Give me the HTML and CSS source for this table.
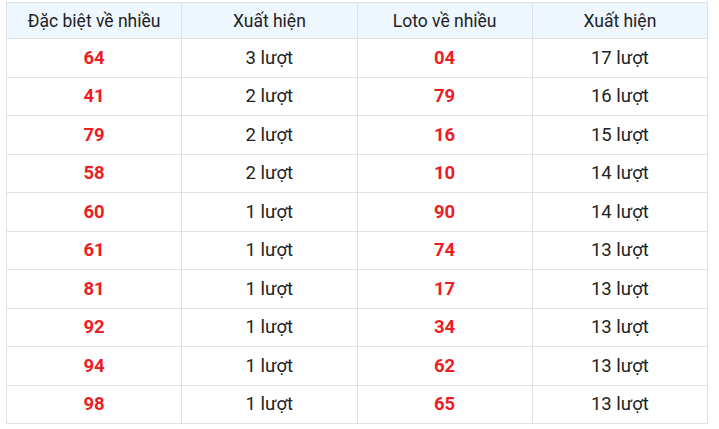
FILE: index.html
```html
<!DOCTYPE html>
<html>
<head>
<meta charset="utf-8">
<link rel="stylesheet" href="styles.css">
</head>
<body>
<div class="wrap">
<table class="stats">
<thead>
<tr><th>Đặc biệt về nhiều</th><th>Xuất hiện</th><th>Loto về nhiều</th><th>Xuất hiện</th></tr>
</thead>
<tbody>
<tr><td class="num">64</td><td>3 lượt</td><td class="num">04</td><td>17 lượt</td></tr>
<tr><td class="num">41</td><td>2 lượt</td><td class="num">79</td><td>16 lượt</td></tr>
<tr><td class="num">79</td><td>2 lượt</td><td class="num">16</td><td>15 lượt</td></tr>
<tr><td class="num">58</td><td>2 lượt</td><td class="num">10</td><td>14 lượt</td></tr>
<tr><td class="num">60</td><td>1 lượt</td><td class="num">90</td><td>14 lượt</td></tr>
<tr><td class="num">61</td><td>1 lượt</td><td class="num">74</td><td>13 lượt</td></tr>
<tr><td class="num">81</td><td>1 lượt</td><td class="num">17</td><td>13 lượt</td></tr>
<tr><td class="num">92</td><td>1 lượt</td><td class="num">34</td><td>13 lượt</td></tr>
<tr><td class="num">94</td><td>1 lượt</td><td class="num">62</td><td>13 lượt</td></tr>
<tr><td class="num">98</td><td>1 lượt</td><td class="num">65</td><td>13 lượt</td></tr>
</tbody>
</table>
</div>
</body>
</html>
```
FILE: styles.css
```css
html, body { margin: 0; padding: 0; background: #fff; }
body { font-family: Roboto, "Noto Sans", sans-serif; color: #222; }
.wrap { padding: 2px 11px 0 6px; }
.stats { width: 702px; border-collapse: collapse; table-layout: fixed; }
.stats th, .stats td {
  border: 1px solid #dee2e6;
  text-align: center;
  padding: 0;
}
.stats th { background: #eef6fe; font-weight: 400; height: 35px; font-size: 17.5px; }
.stats td { height: 37.5px; font-size: 18.5px; }
.stats td.num { color: #ee1c25; font-weight: 700; }
```
